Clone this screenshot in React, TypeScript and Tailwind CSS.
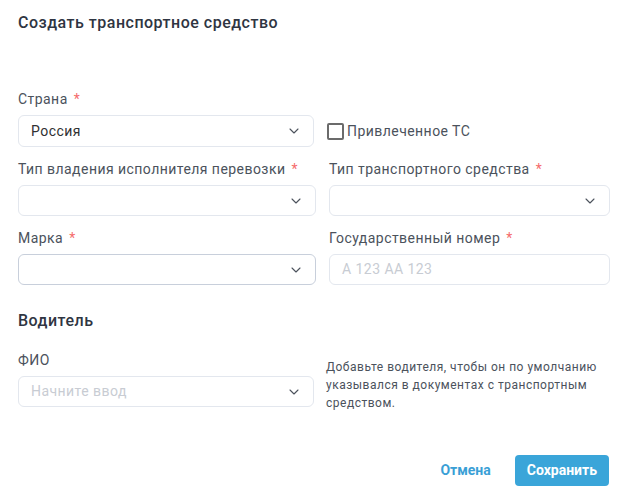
import { ChevronDown } from 'lucide-react'

function Label({ text, required }: { text: string; required?: boolean }) {
  return (
    <div className="text-[14px] leading-[17px] tracking-[0.45px] text-[#4b525c] mb-[7px]">
      {text}
      {required && <span className="text-[#f56c6c] ml-[6px]">*</span>}
    </div>
  )
}

function Select({
  value,
  placeholder,
  border = 'border-[#e3e7ee]',
  className = '',
}: {
  value?: string
  placeholder?: string
  border?: string
  className?: string
}) {
  return (
    <div
      className={`h-[31px] border ${border} rounded-[6px] flex items-center pl-[12px] pr-[11px] bg-white ${className}`}
    >
      <span className={`flex-1 text-[14px] tracking-[0.45px] ${value ? 'text-[#303133]' : 'text-[#c8ccd3]'}`}>
        {value || placeholder}
      </span>
      <ChevronDown className="w-[16px] h-[16px] text-[#4b525c]" strokeWidth={1.6} />
    </div>
  )
}

export default function App() {
  return (
    <div
      className="w-[634px] h-[489px] bg-white px-[18px] pt-[13px]"
      style={{ fontFamily: 'Roboto, "Liberation Sans", sans-serif' }}
    >
      <h1 className="text-[16px] leading-[20px] font-medium tracking-[0.5px] text-[#2f3542]">
        Создать транспортное средство
      </h1>

      <div className="mt-[58px]">
        <Label text="Страна" required />
        <div className="flex items-center">
          <Select value="Россия" className="w-[296px] h-[32px]" />
          <label className="flex items-center ml-[13px] text-[14px] tracking-[0.45px] text-[#4b525c]">
            <span className="w-[17px] h-[17px] border-2 border-[#6b6b6b] rounded-[2px] mr-[3px]" />
            Привлеченное ТС
          </label>
        </div>
      </div>

      <div className="grid grid-cols-[298px_281px] gap-x-[13px] mt-[14px]">
        <div>
          <Label text="Тип владения исполнителя перевозки" required />
          <Select />
        </div>
        <div>
          <Label text="Тип транспортного средства" required />
          <Select />
        </div>
        <div className="mt-[14px]">
          <Label text="Марка" required />
          <Select border="border-[#c8cfdb]" />
        </div>
        <div className="mt-[14px]">
          <Label text="Государственный номер" required />
          <div className="h-[31px] border border-[#e3e7ee] rounded-[6px] flex items-center px-[12px] text-[14px] tracking-[0.45px] text-[#c8ccd3]">
            А 123 АА 123
          </div>
        </div>
      </div>

      <h2 className="text-[16px] leading-[20px] font-medium tracking-[0.5px] text-[#2f3542] mt-[26px]">
        Водитель
      </h2>

      <div className="flex mt-[21px]">
        <div className="w-[296px] shrink-0">
          <Label text="ФИО" />
          <Select placeholder="Начните ввод" />
        </div>
        <p className="ml-[12px] mt-[6px] w-[285px] text-[12px] leading-[18px] tracking-[0.5px] text-[#4b525c]">
          Добавьте водителя, чтобы он по умолчанию указывался в документах с транспортным средством.
        </p>
      </div>

      <div className="flex justify-end items-center mt-[43px] mr-[7px]">
        <button className="text-[14px] font-bold text-[#3a9fd6] mr-[24px]">Отмена</button>
        <button className="h-[31px] px-[12px] rounded-[4px] bg-[#3aa5d9] text-white text-[14px] font-bold">
          Сохранить
        </button>
      </div>
    </div>
  )
}
